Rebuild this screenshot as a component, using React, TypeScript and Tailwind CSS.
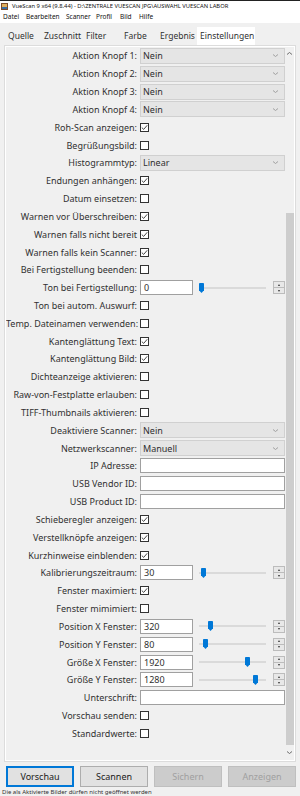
import React from 'react';

type Row =
  | { label: string; kind: 'select'; value: string }
  | { label: string; kind: 'check'; checked: boolean }
  | { label: string; kind: 'slider'; value: string; pos: number }
  | { label: string; kind: 'input' };

const rows: Row[] = [
  { label: 'Aktion Knopf 1:', kind: 'select', value: 'Nein' },
  { label: 'Aktion Knopf 2:', kind: 'select', value: 'Nein' },
  { label: 'Aktion Knopf 3:', kind: 'select', value: 'Nein' },
  { label: 'Aktion Knopf 4:', kind: 'select', value: 'Nein' },
  { label: 'Roh-Scan anzeigen:', kind: 'check', checked: true },
  { label: 'Begrüßungsbild:', kind: 'check', checked: false },
  { label: 'Histogrammtyp:', kind: 'select', value: 'Linear' },
  { label: 'Endungen anhängen:', kind: 'check', checked: true },
  { label: 'Datum einsetzen:', kind: 'check', checked: false },
  { label: 'Warnen vor Überschreiben:', kind: 'check', checked: true },
  { label: 'Warnen falls nicht bereit', kind: 'check', checked: true },
  { label: 'Warnen falls kein Scanner:', kind: 'check', checked: true },
  { label: 'Bei Fertigstellung beenden:', kind: 'check', checked: false },
  { label: 'Ton bei Fertigstellung:', kind: 'slider', value: '0', pos: 0 },
  { label: 'Ton bei autom. Auswurf:', kind: 'check', checked: false },
  { label: 'Temp. Dateinamen verwenden:', kind: 'check', checked: false },
  { label: 'Kantenglättung Text:', kind: 'check', checked: true },
  { label: 'Kantenglättung Bild:', kind: 'check', checked: true },
  { label: 'Dichteanzeige aktivieren:', kind: 'check', checked: false },
  { label: 'Raw-von-Festplatte erlauben:', kind: 'check', checked: false },
  { label: 'TIFF-Thumbnails aktivieren:', kind: 'check', checked: false },
  { label: 'Deaktiviere Scanner:', kind: 'select', value: 'Nein' },
  { label: 'Netzwerkscanner:', kind: 'select', value: 'Manuell' },
  { label: 'IP Adresse:', kind: 'input' },
  { label: 'USB Vendor ID:', kind: 'input' },
  { label: 'USB Product ID:', kind: 'input' },
  { label: 'Schieberegler anzeigen:', kind: 'check', checked: true },
  { label: 'Verstellknöpfe anzeigen:', kind: 'check', checked: true },
  { label: 'Kurzhinweise einblenden:', kind: 'check', checked: true },
  { label: 'Kalibrierungszeitraum:', kind: 'slider', value: '30', pos: 2 },
  { label: 'Fenster maximiert:', kind: 'check', checked: true },
  { label: 'Fenster mimimiert:', kind: 'check', checked: false },
  { label: 'Position X Fenster:', kind: 'slider', value: '320', pos: 9 },
  { label: 'Position Y Fenster:', kind: 'slider', value: '80', pos: 4 },
  { label: 'Größe X Fenster:', kind: 'slider', value: '1920', pos: 46 },
  { label: 'Größe Y Fenster:', kind: 'slider', value: '1280', pos: 54 },
  { label: 'Unterschrift:', kind: 'input' },
  { label: 'Vorschau senden:', kind: 'check', checked: false },
  { label: 'Standardwerte:', kind: 'check', checked: false },
];

const tabs = [
  { name: 'Quelle', cls: 'w-[37px] pl-[4px]' },
  { name: 'Zuschnitt', cls: 'w-[43px] pl-[3px]' },
  { name: 'Filter', cls: 'w-[34px] pl-[2px]' },
  { name: 'Farbe', cls: 'w-[38px] pl-[6px]' },
  { name: 'Ergebnis', cls: 'w-[41px] pl-[4px]' },
];

const Chevron = () => (
  <svg width="7" height="5" viewBox="0 0 7 5" className="shrink-0">
    <path d="M1 1.5 L3.5 3.5 L6 1.5" fill="none" stroke="#9a9a9a" strokeWidth="0.9" />
  </svg>
);

const Control: React.FC<{ row: Row }> = ({ row }) => {
  if (row.kind === 'select') {
    return (
      <div className="w-[145px] h-[16px] bg-[#e5e5e5] border border-[#d0d0d0] flex items-center justify-between pl-[2px] pr-[5px]">
        <span>{row.value}</span>
        <Chevron />
      </div>
    );
  }
  if (row.kind === 'check') {
    return (
      <div className="w-[9px] h-[9px] border border-[#333333] bg-white flex items-center justify-center">
        {row.checked && (
          <svg width="7" height="7" viewBox="0 0 7 7">
            <path d="M0.8 3.6 L2.7 5.4 L6.2 1.3" fill="none" stroke="#333333" strokeWidth="0.9" />
          </svg>
        )}
      </div>
    );
  }
  if (row.kind === 'input') {
    return <div className="w-[145px] h-[15px] bg-white border border-[#a0a0a0]" />;
  }
  return (
    <div className="flex items-center w-[145px]">
      <div className="w-[53px] h-[15px] bg-white border border-[#a0a0a0] flex items-center pl-[3px]">{row.value}</div>
      <div className="relative w-[67px] h-[12px] ml-[6px] flex items-center">
        <div className="w-full h-[2px] bg-[#dadada]" />
        <svg width="5" height="10" viewBox="0 0 5 10" className="absolute top-[1px]" style={{ left: row.pos }}>
          <path d="M0 0.8 Q0 0 0.8 0 L4.2 0 Q5 0 5 0.8 L5 7.2 L2.5 10 L0 7.2 Z" fill="#0078d7" />
        </svg>
      </div>
      <div className="ml-auto w-[12px] h-[13px] border border-[#bcbcbc] bg-[#e8e8e8] flex flex-col">
        <div className="flex-1 flex items-center justify-center border-b border-[#bcbcbc]">
          <div className="w-0 h-0 border-l-[1.5px] border-r-[1.5px] border-b-[2px] border-l-transparent border-r-transparent border-b-[#333]" />
        </div>
        <div className="flex-1 flex items-center justify-center">
          <div className="w-0 h-0 border-l-[1.5px] border-r-[1.5px] border-t-[2px] border-l-transparent border-r-transparent border-t-[#333]" />
        </div>
      </div>
    </div>
  );
};

const Button: React.FC<{ label: string; variant: 'default' | 'normal' | 'disabled' }> = ({ label, variant }) => {
  const cls =
    variant === 'default'
      ? 'border-2 border-[#0078d7] bg-[#e1e1e1] text-[#1a1a1a]'
      : variant === 'normal'
        ? 'border border-[#adadad] bg-[#e1e1e1] text-[#1a1a1a]'
        : 'border border-[#bfbfbf] bg-[#cccccc] text-[#a0a0a0]';
  return <div className={`w-[68px] h-[21px] flex items-center justify-center ${cls}`}>{label}</div>;
};

export default function App() {
  return (
    <div className="w-[300px] h-[796px] overflow-hidden bg-[#f0f0f0] text-[#303030] font-['Noto_Sans',sans-serif] text-[9px] leading-none">
      {/* title bar */}
      <div className="h-[12px] bg-white border-t border-[#222] flex items-center pl-[1px] gap-[4px] text-[5.8px] text-[#111]">
        <svg width="7" height="7" viewBox="0 0 7 7" className="shrink-0">
          <rect x="0" y="0" width="7" height="7" fill="#7a4b2a" />
          <rect x="1" y="1" width="5" height="3" fill="#e0b060" />
          <rect x="1" y="4" width="5" height="2" fill="#3a6ea5" />
        </svg>
        <span className="whitespace-nowrap">VueScan 9 x64 (9.8.44) - D:\ZENTRALE VUESCAN JPG\AUSWAHL VUESCAN LABOR</span>
      </div>
      {/* menu */}
      <div className="h-[11px] bg-white flex items-center text-[6.5px] text-[#111] pl-[3px]">
        <span className="w-[23px]">Datei</span>
        <span className="w-[40px]">Bearbeiten</span>
        <span className="w-[30px]">Scanner</span>
        <span className="w-[24px]">Profil</span>
        <span className="w-[19px]">Bild</span>
        <span>Hilfe</span>
      </div>
      {/* tabs */}
      <div className="h-[22px] flex items-end pl-[4px] text-[8.5px]">
        {tabs.map((t) => (
          <div key={t.name} className={`h-[17px] flex items-center ${t.cls}`}>
            {t.name}
          </div>
        ))}
        <div className="h-[18px] w-[58px] bg-white flex items-center pl-[3px]">Einstellungen</div>
      </div>
      {/* panel */}
      <div className="mx-[4px] h-[717px] border border-[#dcdcdc] bg-white p-px flex">
        <div className="flex-1 bg-[#f0f0f0] overflow-hidden">
          {rows.map((row) => (
            <div key={row.label} className="h-[17.84px] flex items-center">
              <div className="w-[131px] text-right whitespace-nowrap">{row.label}</div>
              <div className="ml-[3px]">
                <Control row={row} />
              </div>
            </div>
          ))}
        </div>
        <div className="w-[9px] bg-[#f0f0f0] flex flex-col items-center">
          <div className="h-[12px] flex items-center justify-center">
            <svg width="7" height="5" viewBox="0 0 7 5">
              <path d="M1 3.5 L3.5 1.5 L6 3.5" fill="none" stroke="#606060" strokeWidth="0.9" />
            </svg>
          </div>
          <div className="h-[154px]" />
          <div className="w-[8px] h-[532px] bg-[#cdcdcd]" />
          <div className="flex-1 flex items-center justify-center">
            <svg width="7" height="5" viewBox="0 0 7 5">
              <path d="M1 1.5 L3.5 3.5 L6 1.5" fill="none" stroke="#606060" strokeWidth="0.9" />
            </svg>
          </div>
        </div>
      </div>
      {/* buttons */}
      <div className="flex gap-[6px] pl-[6px] mt-[4px]">
        <Button label="Vorschau" variant="default" />
        <Button label="Scannen" variant="normal" />
        <Button label="Sichern" variant="disabled" />
        <Button label="Anzeigen" variant="disabled" />
      </div>
      {/* status */}
      <div className="mt-[2px] h-[7px] pl-[2px] text-[6px] whitespace-nowrap">Die als Aktivierte Bilder dürfen nicht geöffnet werden</div>
    </div>
  );
}
